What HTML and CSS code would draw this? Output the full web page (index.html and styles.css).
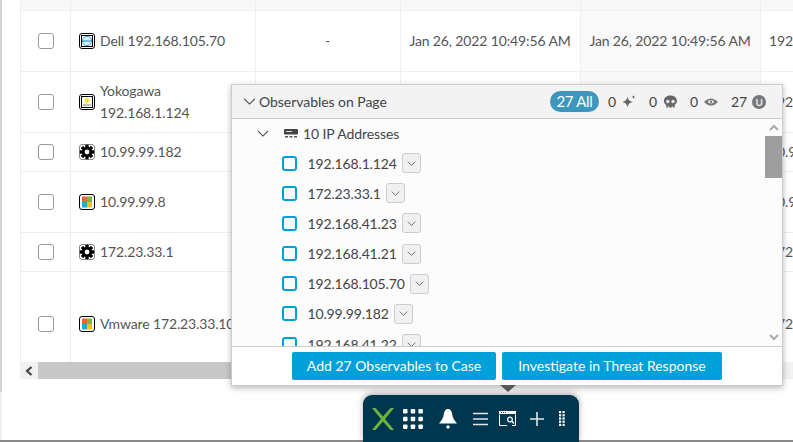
FILE: index.html
```html
<!DOCTYPE html>
<html lang="en">
<head>
<meta charset="utf-8">
<title>Observables on Page</title>
<link rel="stylesheet" href="styles.css">
</head>
<body>
<svg class="defs" width="0" height="0" aria-hidden="true">
  <symbol id="gear" viewBox="0 0 16 16">
    <rect x=".5" y=".5" width="15" height="15" rx="2.5" fill="#fff" stroke="#888"/>
    <g fill="#000">
      <circle cx="8" cy="8" r="5"/>
      <rect x="6.3" y=".8" width="3.4" height="14.4" rx=".6"/>
      <rect x=".8" y="6.3" width="14.4" height="3.4" rx=".6"/>
      <rect x="6.3" y=".8" width="3.4" height="14.4" rx=".6" transform="rotate(45 8 8)"/>
      <rect x="6.3" y=".8" width="3.4" height="14.4" rx=".6" transform="rotate(-45 8 8)"/>
    </g>
    <circle cx="8" cy="8" r="2.4" fill="#fff"/>
  </symbol>
  <symbol id="win" viewBox="0 0 16 16">
    <rect x=".5" y=".5" width="15" height="15" rx="2.5" fill="#fff" stroke="#000"/>
    <rect x="3" y="2.500" width="5" height="5.500" fill="#f0643c"/>
    <rect x="8" y="2.500" width="5" height="5.500" fill="#7cb83c"/>
    <rect x="3" y="8" width="5" height="5.500" fill="#20a8e8"/>
    <rect x="8" y="8" width="5" height="5.500" fill="#fcc010"/>
  </symbol>
  <symbol id="dell" viewBox="0 0 16 16">
    <rect x=".5" y=".5" width="15" height="15" rx="2.5" fill="#fff" stroke="#000"/>
    <rect x="2.5" y="2.5" width="11" height="11" fill="#fff" stroke="#000"/>
    <circle cx="8" cy="8" r="4.600" fill="#dff1fb" stroke="#45a8de" stroke-width="1"/>
    <rect x="4" y="7.300" width="8" height="1.500" fill="#45a8de"/>
  </symbol>
  <symbol id="yoko" viewBox="0 0 16 16">
    <rect x=".5" y=".5" width="15" height="15" rx="2.5" fill="#fff" stroke="#000"/>
    <rect x="2.5" y="2.5" width="11" height="11" fill="#fbfbf0" stroke="#000"/>
    <path d="M8 3.8 10.6 6.6 8 9.4 5.4 6.6Z" fill="#ffe000"/>
    <rect x="4" y="10.4" width="8" height="1.2" fill="#999"/>
  </symbol>
  <symbol id="chev" viewBox="0 0 14 8">
    <path d="M1 1 7 7 13 1" fill="none" stroke="currentColor" stroke-width="1.2"/>
  </symbol>
</svg>

<div class="page">
  <div class="content">
    <div class="table">
      <div class="row row-head">
        <div class="cell"></div><div class="cell"></div><div class="cell"></div><div class="cell"></div><div class="cell sorted-head"></div><div class="cell"></div>
      </div>
      <div class="row row-tall">
        <div class="cell cell-check"><span class="check"></span></div>
        <div class="cell cell-name"><svg class="dev"><use href="#dell"/></svg><span>Dell 192.168.105.70</span></div>
        <div class="cell cell-center">-</div>
        <div class="cell cell-center">Jan 26, 2022 10:49:56 AM</div>
        <div class="cell cell-center sorted">Jan 26, 2022 10:49:56 AM</div>
        <div class="cell cell-ip">192.168.105.70</div>
      </div>
      <div class="row row-tall">
        <div class="cell cell-check"><span class="check"></span></div>
        <div class="cell cell-name"><svg class="dev"><use href="#yoko"/></svg><span class="two">Yokogawa<br>192.168.1.124</span></div>
        <div class="cell"></div>
        <div class="cell"></div>
        <div class="cell sorted"></div>
        <div class="cell cell-ip">192.168.1.124</div>
      </div>
      <div class="row row-short">
        <div class="cell cell-check"><span class="check"></span></div>
        <div class="cell cell-name"><svg class="dev"><use href="#gear"/></svg><span>10.99.99.182</span></div>
        <div class="cell"></div>
        <div class="cell"></div>
        <div class="cell sorted"></div>
        <div class="cell cell-ip">10.99.99.182</div>
      </div>
      <div class="row row-tall">
        <div class="cell cell-check"><span class="check"></span></div>
        <div class="cell cell-name"><svg class="dev"><use href="#win"/></svg><span>10.99.99.8</span></div>
        <div class="cell"></div>
        <div class="cell"></div>
        <div class="cell sorted"></div>
        <div class="cell cell-ip">10.99.99.8</div>
      </div>
      <div class="row row-short">
        <div class="cell cell-check"><span class="check"></span></div>
        <div class="cell cell-name"><svg class="dev"><use href="#gear"/></svg><span>172.23.33.1</span></div>
        <div class="cell"></div>
        <div class="cell"></div>
        <div class="cell sorted"></div>
        <div class="cell cell-ip">172.23.33.1</div>
      </div>
      <div class="row row-last">
        <div class="cell cell-check"><span class="check"></span></div>
        <div class="cell cell-name"><svg class="dev"><use href="#win"/></svg><span>Vmware 172.23.33.10</span></div>
        <div class="cell"></div>
        <div class="cell"></div>
        <div class="cell sorted"></div>
        <div class="cell cell-ip">172.23.33.10</div>
      </div>
      <div class="hscroll">
        <span class="hscroll-btn"><svg width="8" height="10" viewBox="0 0 8 10"><path d="M6.5 1 2 5 6.5 9" fill="none" stroke="#444" stroke-width="2.2"/></svg></span>
        <span class="hscroll-thumb"></span>
      </div>
    </div>
  </div>
  <div class="under"></div>
  <div class="baseline"></div>

  <section class="popup">
    <header class="popup-head">
      <svg class="chev-lg"><use href="#chev"/></svg>
      <span class="popup-title">Observables on Page</span>
      <span class="pill">27 All</span>
      <span class="stat stat-first">0
        <svg width="14" height="14" viewBox="0 0 14 14"><path d="M5.500 1.500C6.200 5 7.500 6.300 11 7 7.500 7.700 6.200 9 5.500 12.500 4.800 9 3.500 7.700 0 7 3.500 6.300 4.800 5 5.500 1.500Z" fill="#666"/><path d="M11.500 0C11.700 1.300 12.200 1.800 13.500 2 12.200 2.200 11.700 2.700 11.500 4 11.300 2.700 10.800 2.200 9.500 2 10.800 1.800 11.300 1.300 11.500 0Z" fill="#666"/></svg>
      </span>
      <span class="stat">0
        <svg width="16" height="14" viewBox="0 0 16 14"><path d="M8 0C3.600 0 1 2.600 1 6c0 2 1 3.400 2.500 4.200V13h2v-1.500h1V13h3v-1.500h1V13h2v-2.800C14 9.400 15 8 15 6c0-3.400-2.600-6-7-6Z" fill="#666"/><circle cx="5.200" cy="6.500" r="1.800" fill="#f3f3f3"/><circle cx="10.800" cy="6.500" r="1.800" fill="#f3f3f3"/></svg>
      </span>
      <span class="stat">0
        <svg width="14" height="8" viewBox="0 0 14 8"><path d="M0 4C3 1 5 .5 7 .5S11 1 14 4C11 7 9 7.500 7 7.500S3 7 0 4Z" fill="#777"/><ellipse cx="7" cy="3.700" rx="3" ry="1.700" fill="#f3f3f3"/><circle cx="7" cy="3.700" r="1.200" fill="#777"/></svg>
      </span>
      <span class="stat stat-u">27
        <span class="u-badge">U</span>
      </span>
    </header>
    <div class="popup-body">
      <div class="list">
        <div class="group">
          <svg class="chev-md"><use href="#chev"/></svg>
          <svg class="server" width="14" height="9" viewBox="0 0 14 9"><rect y="0" width="14" height="5.500" rx="1" fill="#444"/><rect x="2" y="2" width="6" height="1" fill="#ddd"/><rect x="1" y="7" width="3" height="1.500" fill="#555"/><rect x="5.500" y="7" width="3" height="1.500" fill="#555"/><rect x="10" y="7" width="3" height="1.500" fill="#555"/></svg>
          <span>10 IP Addresses</span>
        </div>
        <div class="item"><span class="box"></span><span>192.168.1.124</span><span class="drop"><svg class="chev-sm"><use href="#chev"/></svg></span></div>
        <div class="item"><span class="box"></span><span>172.23.33.1</span><span class="drop"><svg class="chev-sm"><use href="#chev"/></svg></span></div>
        <div class="item"><span class="box"></span><span>192.168.41.23</span><span class="drop"><svg class="chev-sm"><use href="#chev"/></svg></span></div>
        <div class="item"><span class="box"></span><span>192.168.41.21</span><span class="drop"><svg class="chev-sm"><use href="#chev"/></svg></span></div>
        <div class="item"><span class="box"></span><span>192.168.105.70</span><span class="drop"><svg class="chev-sm"><use href="#chev"/></svg></span></div>
        <div class="item"><span class="box"></span><span>10.99.99.182</span><span class="drop"><svg class="chev-sm"><use href="#chev"/></svg></span></div>
        <div class="item"><span class="box"></span><span>192.168.41.22</span><span class="drop"><svg class="chev-sm"><use href="#chev"/></svg></span></div>
      </div>
      <div class="vscroll">
        <svg class="vs-up" width="10" height="7" viewBox="0 0 10 7"><path d="M1 6 5 2 9 6" fill="none" stroke="#aaa" stroke-width="2"/></svg>
        <span class="vs-thumb"></span>
        <svg class="vs-down" width="10" height="7" viewBox="0 0 10 7"><path d="M1 1 5 5 9 1" fill="none" stroke="#aaa" stroke-width="2"/></svg>
      </div>
    </div>
    <footer class="popup-foot">
      <button class="btn btn-case">Add 27 Observables to Case</button>
      <button class="btn btn-threat">Investigate in Threat Response</button>
    </footer>
  </section>
  <div class="pointer"></div>

  <nav class="dock">
    <svg class="logo" width="22" height="22" viewBox="0 0 22 22"><path d="M0 0H3.500L11 8.500 18.500 0H22L13 11 22 22H18.500L11 13.500 3.500 22H0L9 11Z" fill="#6cb33f"/></svg>
    <svg class="apps" width="20" height="20" viewBox="0 0 20 20"><g fill="#fff"><rect width="4.500" height="4.500" rx=".8"/><rect x="7.700" width="4.500" height="4.500" rx=".8"/><rect x="15.400" width="4.500" height="4.500" rx=".8"/><rect y="7.700" width="4.500" height="4.500" rx=".8"/><rect x="7.700" y="7.700" width="4.500" height="4.500" rx=".8"/><rect x="15.400" y="7.700" width="4.500" height="4.500" rx=".8"/><rect y="15.400" width="4.500" height="4.500" rx=".8"/><rect x="7.700" y="15.400" width="4.500" height="4.500" rx=".8"/><rect x="15.400" y="15.400" width="4.500" height="4.500" rx=".8"/></g></svg>
    <svg class="bell" width="18" height="20" viewBox="0 0 18 20"><path d="M9 0C11.500 0 12.800 2 13.200 5 13.700 9 15 11 18 14.500H0C3 11 4.300 9 4.800 5 5.200 2 6.500 0 9 0Z" fill="#fff"/><circle cx="9" cy="18" r="1.700" fill="#fff"/></svg>
    <svg class="menu" width="15" height="14" viewBox="0 0 15 14"><path d="M0 1.500H15M0 7H15M0 12.500H15" stroke="#dfe6ea" stroke-width="1.500"/></svg>
    <svg class="find" width="17" height="15" viewBox="0 0 17 15"><path d="M.5 3.500V14.500H16.500V3.500" fill="none" stroke="#fff"/><rect width="17" height="3" fill="#fff"/><g fill="#00374f"><rect x="2" y="1" width="1" height="1"/><rect x="4" y="1" width="1" height="1"/><rect x="6" y="1" width="1" height="1"/></g><rect x="8" y="12" width="5" height="4" fill="#00374f"/><circle cx="11" cy="8.500" r="2.300" fill="none" stroke="#fff" stroke-width="1.200"/><path d="M12.800 10.300 15 12.500" stroke="#fff" stroke-width="1.500"/></svg>
    <svg class="plus" width="14" height="14" viewBox="0 0 14 14"><path d="M7 0V14M0 7H14" stroke="#dfe6ea" stroke-width="1.600"/></svg>
    <svg class="grip" width="6" height="15" viewBox="0 0 6 15"><g fill="#fff"><rect width="2.200" height="2.200"/><rect x="3.500" width="2.200" height="2.200"/><rect y="3.200" width="2.200" height="2.200"/><rect x="3.500" y="3.200" width="2.200" height="2.200"/><rect y="6.400" width="2.200" height="2.200"/><rect x="3.500" y="6.400" width="2.200" height="2.200"/><rect y="9.600" width="2.200" height="2.200"/><rect x="3.500" y="9.600" width="2.200" height="2.200"/><rect y="12.800" width="2.200" height="2.200"/><rect x="3.500" y="12.800" width="2.200" height="2.200"/></g></svg>
  </nav>
</div>
</body>
</html>
```

FILE: styles.css
```css
* { box-sizing: border-box; }
html, body { margin: 0; padding: 0; }
body {
  width: 793px;
  height: 442px;
  overflow: hidden;
  background: #fff;
  font-family: Lato, "Open Sans", sans-serif;
  font-size: 14px;
  color: #555;
}
.defs { position: absolute; }
.page { position: relative; width: 793px; height: 442px; overflow: hidden; }
.content { height: 392px; border-left: 2px solid #d4d4d4; padding-left: 18px; }
.under { height: 48px; border-left: 2px solid #f0f0f0; }
.baseline { height: 2px; background: #8a8a8a; }

.table { width: 773px; overflow: hidden; }
.row {
  display: grid;
  grid-template-columns: 50px 185px 145px 180px 180px 200px;
  width: 940px;
  border-bottom: 1px solid #eee;
  white-space: nowrap;
  letter-spacing: -.13px;
}
.row-head { height: 11px; background: #f8f8f8; }
.row-tall { height: 61px; }
.row-short { height: 39px; }
.row-last { height: 90px; border-bottom: 0; }
.row-last .cell { padding-top: 13px; }
.cell { display: flex; align-items: center; border-left: 1px solid #eee; min-width: 0; overflow: hidden; line-height: 20px; }
.cell-check { justify-content: center; }
.cell-name { padding-left: 8px; gap: 5px; }
.cell-center { justify-content: center; padding-right: 1px; }
.cell-ip { padding-left: 8px; }
.sorted { background: #f9f9f9; }
.check { width: 16px; height: 16px; border: 1px solid #999; border-radius: 3px; background: #fff; }
.dev { width: 16px; height: 16px; flex: none; }
.two { line-height: 22px; }

.hscroll { display: flex; height: 17px; background: #f1f1f1; }
.hscroll-btn { width: 18px; display: flex; align-items: center; justify-content: center; }
.hscroll-thumb { width: 720px; background: #c8c8c8; }

.popup {
  position: absolute;
  left: 231px;
  top: 84px;
  width: 552px;
  height: 302px;
  display: flex;
  flex-direction: column;
  background: #fff;
  border: 1px solid #ccc;
  box-shadow: 0 2px 6px rgba(0, 0, 0, .28);
  color: #444;
}
.popup-head {
  height: 34px;
  flex: none;
  display: flex;
  align-items: center;
  padding-left: 11px;
  background: #f3f3f3;
  border-bottom: 1px solid #ccc;
}
.chev-lg { width: 13px; height: 7px; color: #444; margin-right: 3px; }
.popup-title { flex: 1; letter-spacing: -.05px; }
.pill {
  width: 49px;
  height: 21px;
  border-radius: 11px;
  background: #3e96bd;
  color: #fff;
  font-size: 15px;
  line-height: 21px;
  text-align: center;
  letter-spacing: -.3px;
}
.stat { display: flex; align-items: center; gap: 6px; margin-left: 12px; width: 29px; font-size: 14px; white-space: nowrap; }
.stat-first { margin-left: 9px; }
.stat-u { width: 35px; margin-left: 12px; margin-right: 16px; gap: 5px; }
.u-badge {
  width: 14px;
  height: 14px;
  flex: none;
  border-radius: 50%;
  background: #777;
  color: #eee;
  font-size: 10px;
  font-weight: 700;
  line-height: 14px;
  text-align: center;
}
.popup-body { flex: 1; display: flex; min-height: 0; background: #fcfcfc; }
.list { flex: 1; overflow: hidden; padding-top: 4px; }
.group { display: flex; align-items: center; height: 20px; padding-left: 25px; margin-bottom: 10px; letter-spacing: -.1px; }
.chev-md { width: 12px; height: 7px; color: #444; margin-right: 15px; }
.server { margin-right: 5px; }
.item { display: flex; align-items: center; height: 20px; margin-bottom: 10.200px; padding-left: 50px; white-space: nowrap; font-size: 14px; letter-spacing: -.15px; }
.box { width: 15px; height: 15px; border: 2.500px solid #00a0d8; border-radius: 3px; background: #fbfdfe; margin-right: 10.500px; flex: none; }
.drop {
  width: 19px;
  height: 20px;
  margin-left: 5px;
  flex: none;
  display: flex;
  align-items: center;
  justify-content: center;
  background: #f0f0f0;
  border: 1px solid #ccc;
  border-radius: 3px;
}
.chev-sm { width: 9px; height: 5px; color: #444; }
.vscroll { width: 17px; flex: none; position: relative; display: flex; flex-direction: column; align-items: center; padding-top: 5px; }
.vs-thumb { width: 17px; height: 42px; background: #9e9e9e; margin-top: 5px; }
.vs-down { margin-top: auto; margin-bottom: 5px; }
.popup-foot {
  height: 39px;
  flex: none;
  display: flex;
  justify-content: center;
  gap: 6px;
  padding: 5px 0 0;
  background: #fff;
  border-top: 1px solid #ccc;
}
.btn {
  height: 28px;
  padding: 0 0 2px;
  border: 0;
  border-radius: 2px;
  background: #00a0d8;
  color: #fff;
  font: 14px Lato, sans-serif;
}
.btn-case { width: 204px; }
.btn-threat { width: 220px; }
.pointer {
  position: absolute;
  left: 500px;
  top: 385px;
  width: 0;
  height: 0;
  border-left: 8px solid transparent;
  border-right: 8px solid transparent;
  border-top: 7px solid #5a5a5a;
}
.dock {
  position: absolute;
  left: 363px;
  top: 395px;
  width: 216px;
  height: 47px;
  background: #00374f;
  border-radius: 9px 9px 0 0;
  box-shadow: 0 -2px 6px rgba(0, 0, 0, .3);
  display: flex;
  align-items: center;
  padding: 0 0 0 9px;
}
.dock svg { flex: none; }
.apps { margin-left: 9px; }
.bell { margin-left: 16px; }
.menu { margin-left: 16px; }
.find { margin-left: 11px; }
.plus { margin-left: 14px; }
.grip { margin-left: 15px; }
```
